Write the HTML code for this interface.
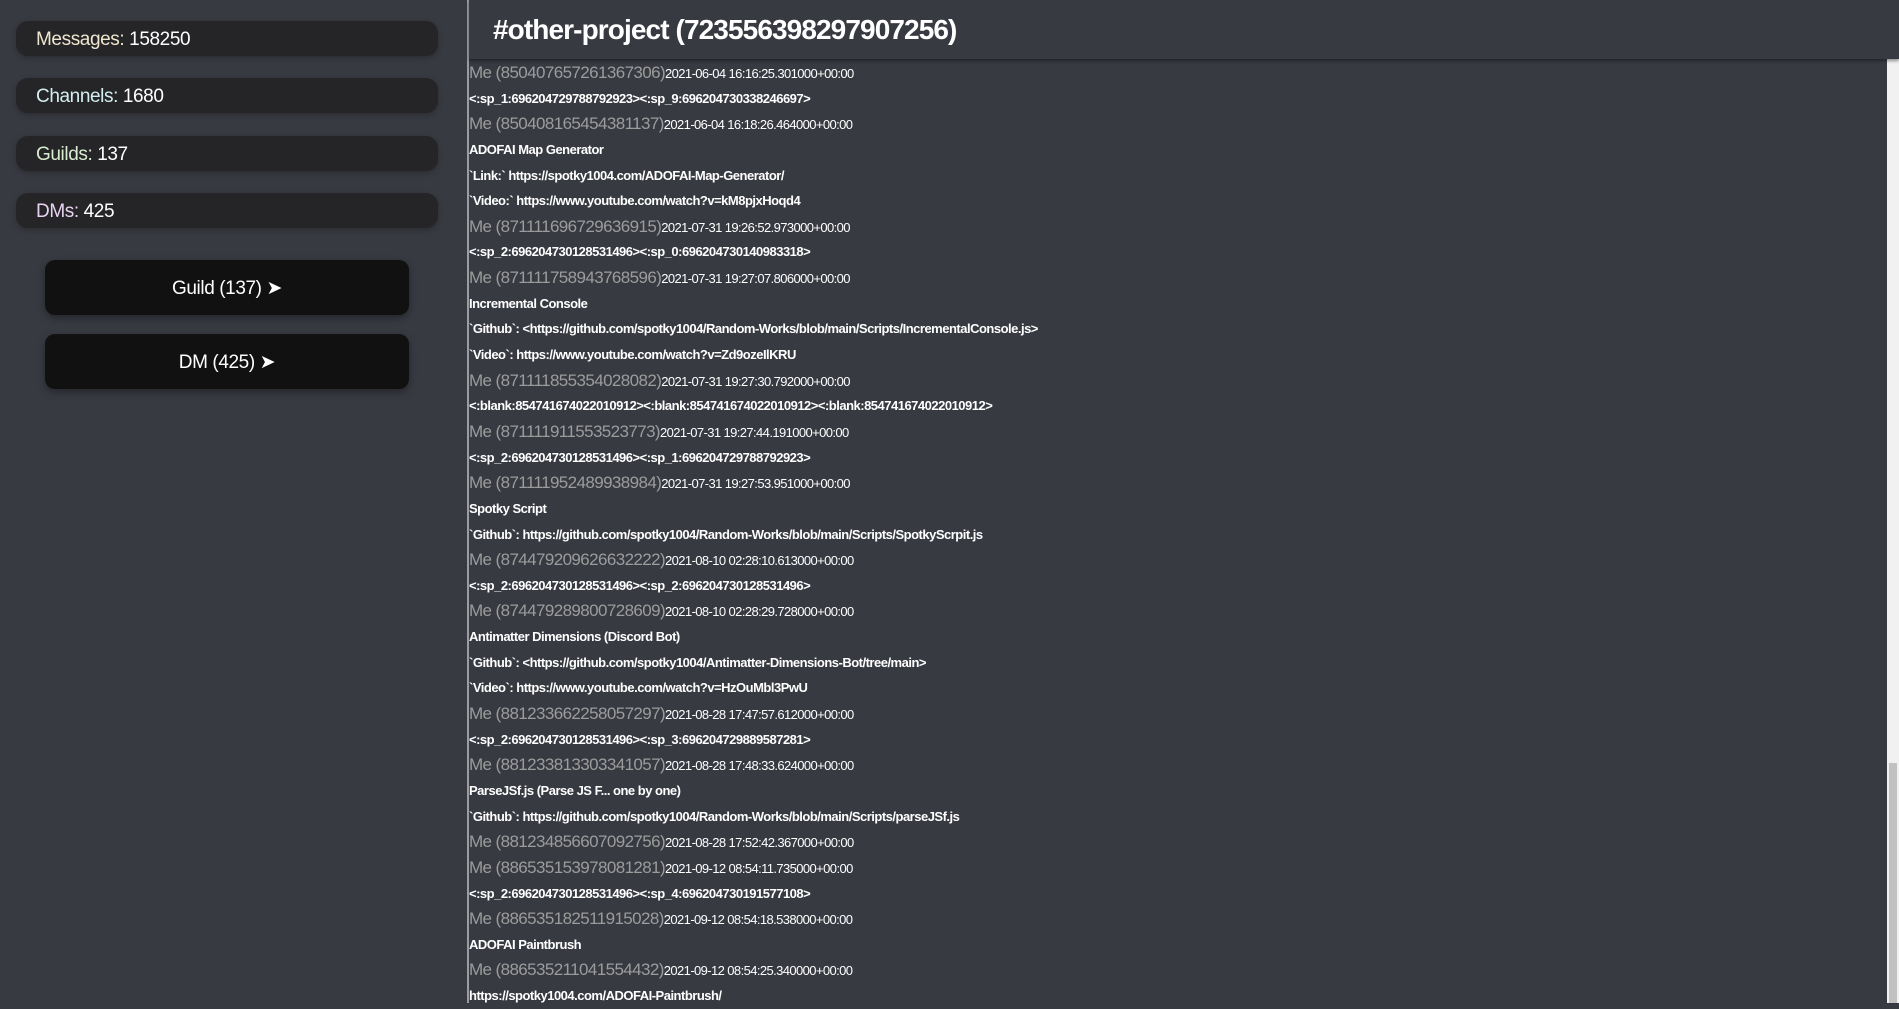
<!DOCTYPE html>
<html><head><meta charset="utf-8"><style>
*{margin:0;padding:0;box-sizing:border-box}
html,body{width:1899px;height:1003px;overflow:hidden;background:#383a42;font-family:"Liberation Sans",sans-serif;color:#fff}
#side{position:absolute;left:0;top:0;width:467px;height:1003px;background:#383a42}
#div{position:absolute;left:467px;top:0;width:2px;height:1003px;background:#9a9ca2}
.stat{position:absolute;left:16px;width:422px;height:35px;background:#252527;border-radius:12px;font-size:19px;line-height:37px;padding-left:20px;box-shadow:0 2px 6px rgba(0,0,0,.25);letter-spacing:-0.4px}
.btn{position:absolute;left:45px;width:364px;height:55px;background:#111;border-radius:10px;font-size:19px;line-height:57px;text-align:center;box-shadow:0 3px 8px rgba(0,0,0,.35);letter-spacing:-0.4px;font-weight:500}
#hdr{position:absolute;left:469px;top:0;width:1430px;height:59px;background:#383a42;box-shadow:0 2px 3px rgba(0,0,0,.4);z-index:2}
#hdr h1{position:absolute;left:24px;top:10px;font-size:28px;font-weight:bold;letter-spacing:-0.9px;line-height:40px}
#msgs{position:absolute;left:469px;top:60px;width:1418px}
.r{height:25.65px;line-height:25.65px;white-space:nowrap;overflow:hidden}
.m{color:#9c9c9c;font-size:17px;letter-spacing:-0.6px}
.m span{color:#fff;font-size:13px;letter-spacing:-0.6px}
.c{font-size:13px;font-weight:bold;letter-spacing:-0.5px}
#sb{position:absolute;left:1887px;top:59px;width:12px;height:944px;background:#f1f1f1}
#th{position:absolute;left:1889px;top:763px;width:8px;height:240px;background:#c1c1c1}
</style></head><body>
<div id="side">
<div class="stat" style="top:21px"><span style="color:#efe6cf">Messages:</span> 158250</div>
<div class="stat" style="top:78px"><span style="color:#d3eef0">Channels:</span> 1680</div>
<div class="stat" style="top:136px"><span style="color:#d8ecd0">Guilds:</span> 137</div>
<div class="stat" style="top:193px"><span style="color:#e8d4f0">DMs:</span> 425</div>
<div class="btn" style="top:260px">Guild (137) ➤</div>
<div class="btn" style="top:334px">DM (425) ➤</div>
</div>
<div id="div"></div>
<div id="hdr"><h1>#other-project (723556398297907256)</h1></div>
<div id="msgs">
<div class="r m">Me (850407657261367306)<span>2021-06-04 16:16:25.301000+00:00</span></div>
<div class="r c">&lt;:sp_1:696204729788792923&gt;&lt;:sp_9:696204730338246697&gt;</div>
<div class="r m">Me (850408165454381137)<span>2021-06-04 16:18:26.464000+00:00</span></div>
<div class="r c">ADOFAI Map Generator</div>
<div class="r c">`Link:` https://spotky1004.com/ADOFAI-Map-Generator/</div>
<div class="r c">`Video:` https://www.youtube.com/watch?v=kM8pjxHoqd4</div>
<div class="r m">Me (871111696729636915)<span>2021-07-31 19:26:52.973000+00:00</span></div>
<div class="r c">&lt;:sp_2:696204730128531496&gt;&lt;:sp_0:696204730140983318&gt;</div>
<div class="r m">Me (871111758943768596)<span>2021-07-31 19:27:07.806000+00:00</span></div>
<div class="r c">Incremental Console</div>
<div class="r c">`Github`: &lt;https://github.com/spotky1004/Random-Works/blob/main/Scripts/IncrementalConsole.js&gt;</div>
<div class="r c">`Video`: https://www.youtube.com/watch?v=Zd9ozeIlKRU</div>
<div class="r m">Me (871111855354028082)<span>2021-07-31 19:27:30.792000+00:00</span></div>
<div class="r c">&lt;:blank:854741674022010912&gt;&lt;:blank:854741674022010912&gt;&lt;:blank:854741674022010912&gt;</div>
<div class="r m">Me (871111911553523773)<span>2021-07-31 19:27:44.191000+00:00</span></div>
<div class="r c">&lt;:sp_2:696204730128531496&gt;&lt;:sp_1:696204729788792923&gt;</div>
<div class="r m">Me (871111952489938984)<span>2021-07-31 19:27:53.951000+00:00</span></div>
<div class="r c">Spotky Script</div>
<div class="r c">`Github`: https://github.com/spotky1004/Random-Works/blob/main/Scripts/SpotkyScrpit.js</div>
<div class="r m">Me (874479209626632222)<span>2021-08-10 02:28:10.613000+00:00</span></div>
<div class="r c">&lt;:sp_2:696204730128531496&gt;&lt;:sp_2:696204730128531496&gt;</div>
<div class="r m">Me (874479289800728609)<span>2021-08-10 02:28:29.728000+00:00</span></div>
<div class="r c">Antimatter Dimensions (Discord Bot)</div>
<div class="r c">`Github`: &lt;https://github.com/spotky1004/Antimatter-Dimensions-Bot/tree/main&gt;</div>
<div class="r c">`Video`: https://www.youtube.com/watch?v=HzOuMbl3PwU</div>
<div class="r m">Me (881233662258057297)<span>2021-08-28 17:47:57.612000+00:00</span></div>
<div class="r c">&lt;:sp_2:696204730128531496&gt;&lt;:sp_3:696204729889587281&gt;</div>
<div class="r m">Me (881233813303341057)<span>2021-08-28 17:48:33.624000+00:00</span></div>
<div class="r c">ParseJSf.js (Parse JS F... one by one)</div>
<div class="r c">`Github`: https://github.com/spotky1004/Random-Works/blob/main/Scripts/parseJSf.js</div>
<div class="r m">Me (881234856607092756)<span>2021-08-28 17:52:42.367000+00:00</span></div>
<div class="r m">Me (886535153978081281)<span>2021-09-12 08:54:11.735000+00:00</span></div>
<div class="r c">&lt;:sp_2:696204730128531496&gt;&lt;:sp_4:696204730191577108&gt;</div>
<div class="r m">Me (886535182511915028)<span>2021-09-12 08:54:18.538000+00:00</span></div>
<div class="r c">ADOFAI Paintbrush</div>
<div class="r m">Me (886535211041554432)<span>2021-09-12 08:54:25.340000+00:00</span></div>
<div class="r c">https://spotky1004.com/ADOFAI-Paintbrush/</div>
</div>
<div id="sb"></div><div id="th"></div>
</body></html>
